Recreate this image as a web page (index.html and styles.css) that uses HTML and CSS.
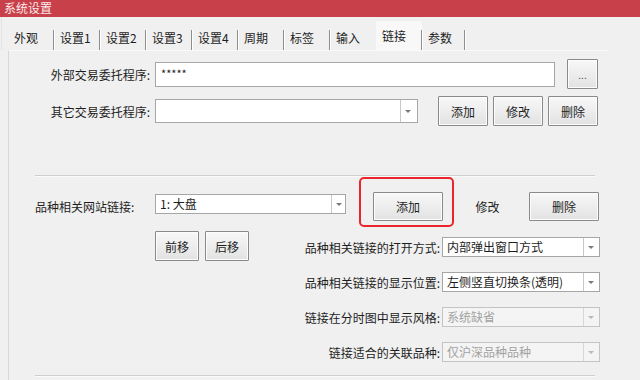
FILE: index.html
```html
<!DOCTYPE html>
<html lang="zh-CN">
<head>
    <meta charset="UTF-8">
    <title>系统设置</title>
    <link rel="stylesheet" href="styles.css">
</head>
<body>
    <div class="window">
        <div class="titlebar">系统设置</div>
        <div class="tabs">
            <span class="tab">外观</span>
            <span class="tab">设置1</span>
            <span class="tab">设置2</span>
            <span class="tab">设置3</span>
            <span class="tab">设置4</span>
            <span class="tab">周期</span>
            <span class="tab">标签</span>
            <span class="tab">输入</span>
            <span class="tab active">链接</span>
            <span class="tab tab-last">参数</span>
        </div>
        <div class="panel">
            <div class="row row-prog">
                <label class="lbl">外部交易委托程序:</label>
                <div class="field prog-input">*****</div>
                <button class="btn btn-dots">...</button>
            </div>
            <div class="row row-other">
                <label class="lbl">其它交易委托程序:</label>
                <div class="combo other-combo"><span class="combo-text"></span><span class="arrow"></span></div>
                <div class="btn-group">
                    <button class="btn btn-small">添加</button>
                    <button class="btn btn-small">修改</button>
                    <button class="btn btn-small">删除</button>
                </div>
            </div>
            <div class="sep"></div>
            <div class="row row-site">
                <label class="lbl lbl-left">品种相关网站链接:</label>
                <div class="combo site-combo"><span class="combo-text">1: 大盘</span><span class="arrow"></span></div>
                <div class="highlight">
                    <button class="btn btn-wide">添加</button>
                </div>
                <button class="btn btn-flat">修改</button>
                <button class="btn btn-wide btn-del">删除</button>
            </div>
            <div class="lower">
                <div class="moves">
                    <button class="btn btn-move">前移</button>
                    <button class="btn btn-move">后移</button>
                </div>
                <div class="links">
                    <label class="link-lbl">品种相关链接的打开方式:</label>
                    <div class="combo"><span class="combo-text">内部弹出窗口方式</span><span class="arrow"></span></div>
                    <label class="link-lbl">品种相关链接的显示位置:</label>
                    <div class="combo"><span class="combo-text">左侧竖直切换条(透明)</span><span class="arrow"></span></div>
                    <label class="link-lbl">链接在分时图中显示风格:</label>
                    <div class="combo disabled"><span class="combo-text">系统缺省</span><span class="arrow"></span></div>
                    <label class="link-lbl">链接适合的关联品种:</label>
                    <div class="combo disabled"><span class="combo-text">仅沪深品种品种</span><span class="arrow"></span></div>
                </div>
            </div>
            <div class="sep sep-bottom"></div>
        </div>
    </div>
</body>
</html>
```

FILE: styles.css
```css
* {
    box-sizing: border-box;
}

body {
    margin: 0;
    padding: 0;
    font-family: "Noto Sans CJK SC", "Noto Sans", sans-serif;
    font-size: 12px;
    color: #1e1e1e;
    background: #f0f0f0;
}

.window {
    width: 640px;
    height: 380px;
    overflow: hidden;
    background: #f0f0f0;
}

.titlebar {
    height: 17px;
    line-height: 16px;
    padding-left: 4px;
    background: #c8414a;
    color: #fbe9ea;
    font-size: 12px;
}

.tabs {
    display: flex;
    height: 33px;
    padding-left: 6px;
    padding-top: 8px;
    border-left: 1px solid #e2e2e2;
    margin-left: 1px;
}

.tab {
    position: relative;
    width: 46px;
    padding-left: 6px;
    line-height: 26px;
    white-space: nowrap;
}

.tab::after {
    content: "";
    position: absolute;
    right: 0;
    top: 5px;
    bottom: 0;
    width: 1px;
    background: #8e8e8e;
    box-shadow: 1px 0 0 #ffffff;
}

.tab.active {
    background: #f8f8f8;
    margin-top: -4px;
    line-height: 30px;
    padding-left: 6px;
}

.tab.active::after {
    top: 9px;
}

.tab:nth-child(8)::after {
    display: none;
}

.tab-last {
    width: 43px;
}

.panel {
    margin-left: 8px;
    border-left: 1px solid #d8d8d8;
    border-top: 1px solid #fafafa;
    width: 600px;
    height: 330px;
}

.row {
    display: flex;
    align-items: center;
}

.lbl {
    width: 146px;
    padding-right: 5px;
    text-align: right;
    white-space: nowrap;
}

.lbl-left {
    text-align: left;
    padding-left: 26px;
}

.field {
    background: #ffffff;
    border: 1px solid #a6a6a6;
}

.row-prog {
    margin-top: 8px;
    height: 30px;
}

.prog-input {
    width: 400px;
    height: 25px;
    padding: 0 5px;
    line-height: 20px;
    font-size: 11px;
}

.btn {
    font-family: inherit;
    font-size: 12px;
    color: #1e1e1e;
    background: linear-gradient(#f8f8f8, #e2e2e2);
    border: 1px solid #8a8a8a;
    border-radius: 1px;
    box-shadow: inset 0 0 0 1px #fcfcfc;
    padding: 0;
    cursor: pointer;
}

.btn-dots {
    margin-left: 12px;
    width: 31px;
    height: 30px;
    font-size: 10px;
    color: #555555;
}

.row-other {
    margin-top: 7px;
    height: 30px;
}

.combo {
    display: flex;
    height: 20px;
    background: #ffffff;
    border: 1px solid #a6a6a6;
}

.combo-text {
    flex: 1;
    padding-left: 4px;
    line-height: 18px;
    white-space: nowrap;
    overflow: hidden;
}

.arrow {
    position: relative;
    width: 16px;
    border-left: 1px solid #c8c8c8;
}

.arrow::after {
    content: "";
    position: absolute;
    left: 4px;
    top: 50%;
    margin-top: -1px;
    border-left: 3px solid transparent;
    border-right: 3px solid transparent;
    border-top: 3px solid #7a7a7a;
}

.other-combo {
    width: 263px;
    height: 24px;
}

.other-combo .arrow {
    width: 17px;
}

.btn-group {
    display: flex;
    gap: 5px;
    margin-left: 20px;
}

.btn-small {
    width: 50px;
    height: 30px;
}

.sep {
    margin-top: 49px;
    margin-left: 26px;
    width: 560px;
    height: 1px;
    background: #cfcfcf;
    box-shadow: 0 1px 0 #fbfbfb;
}

.row-site {
    margin-top: 16px;
    height: 29px;
}

.site-combo {
    width: 191px;
    margin-top: -5px;
}

.site-combo .arrow {
    width: 14px;
}

.highlight {
    position: relative;
    margin-left: 27px;
    display: flex;
}

.highlight::after {
    content: "";
    position: absolute;
    left: -14px;
    right: -11px;
    top: -15px;
    bottom: -6px;
    border: 2px solid #e8262b;
    border-radius: 5px;
    pointer-events: none;
}

.btn-wide {
    width: 70px;
    height: 29px;
}

.btn-flat {
    margin-left: 12px;
    width: 65px;
    height: 29px;
    background: transparent;
    border-color: transparent;
    box-shadow: none;
}

.btn-del {
    margin-left: 9px;
}

.lower {
    display: flex;
    margin-top: 10px;
    width: 591px;
}

.moves {
    display: flex;
    gap: 6px;
    padding-left: 146px;
    align-items: flex-start;
}

.btn-move {
    width: 44px;
    height: 30px;
}

.links {
    margin-left: auto;
    padding-top: 6px;
    display: grid;
    grid-template-columns: auto 158px;
    grid-auto-rows: 20px;
    row-gap: 15px;
    column-gap: 2px;
    align-items: center;
}

.link-lbl {
    text-align: right;
    white-space: nowrap;
}

.combo.disabled {
    background: #f4f4f4;
    border-color: #c4c4c4;
    color: #a2a2a2;
}

.combo.disabled .arrow {
    border-left-color: #d6d6d6;
}

.combo.disabled .arrow::after {
    border-top-color: #b8b8b8;
}

.sep-bottom {
    margin-top: 13px;
}
```
